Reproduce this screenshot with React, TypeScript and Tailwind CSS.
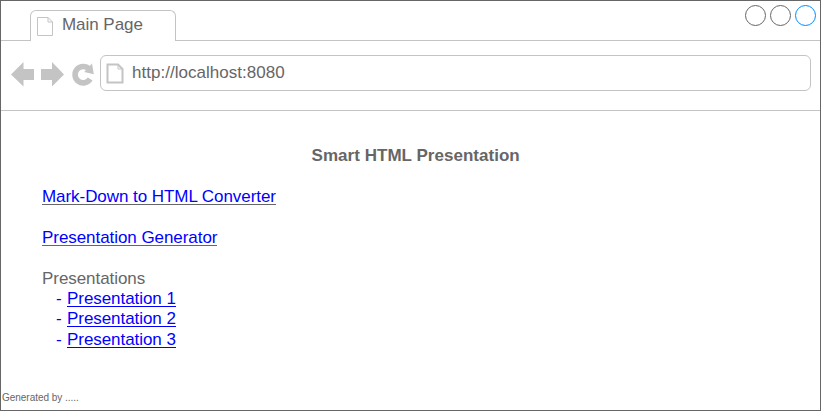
const presentations = ["Presentation 1", "Presentation 2", "Presentation 3"];

function PageIcon({ className, strokeWidth }: { className: string; strokeWidth: number }) {
  return (
    <svg className={className} viewBox="0 0 18 21" fill="none" stroke="#c4c4c4" strokeWidth={strokeWidth}>
      <path d="M1.5 1.5H12L16.5 6V19.5H1.5Z" />
      <path d="M12 1.5V6H16.5" strokeWidth="1" />
    </svg>
  );
}

function TabBar() {
  return (
    <header className="flex h-10 justify-between border-b border-[#c4c4c4]">
      <div className="ml-[29px] mt-[9px] flex h-[31px] w-[146px] rounded-t-[6px] border border-b-0 border-[#c4c4c4] bg-white pl-[5px]">
        <PageIcon className="mt-[5px] h-[21px] w-[18px] shrink-0" strokeWidth={1} />
        <span className="ml-[8px] mt-[4px] leading-5 tracking-[-0.04px]">Main Page</span>
      </div>
      <div className="mr-[4px] mt-[4px] flex gap-[4px]">
        <i className="size-[21px] rounded-full border border-[#666]" />
        <i className="size-[21px] rounded-full border border-[#666]" />
        <i className="size-[21px] rounded-full border border-[#008cff]" />
      </div>
    </header>
  );
}

function Toolbar() {
  return (
    <div className="flex h-[70px] border-b border-[#c4c4c4] pr-[9px]">
      <svg className="ml-[10px] mt-[21px] h-[26px] w-[84px] shrink-0" viewBox="0 0 84 26" fill="#c4c4c4">
        <path d="M0 12.5L12.5 0V7H23V18H12.5V24.5Z" />
        <path d="M53 12.5L41 0V7H30V18H41V24.5Z" />
        <path d="M79.2 17A8.2 8.2 0 1 1 78.2 7" fill="none" stroke="#c4c4c4" strokeWidth="5.6" />
        <path d="M81 1.6L82.8 12.2L73.2 9.9Z" />
      </svg>
      <div className="ml-[5px] mt-[14px] flex h-9 flex-1 rounded-[6px] border border-[#c4c4c4] pl-[5px]">
        <PageIcon className="mt-[7px] h-[21px] w-[18px] shrink-0" strokeWidth={2} />
        <span className="ml-[8px] mt-[7px] leading-5 tracking-[0.03px]">http://localhost:8080</span>
      </div>
    </div>
  );
}

export default function App() {
  return (
    <div className="flex h-[411px] w-[821px] flex-col border border-[#666] bg-white font-['Liberation_Sans',Arial,sans-serif] text-[17px] text-[#666]">
      <TabBar />
      <Toolbar />
      <main className="flex-1 pl-[41px] pt-[35px] leading-[20.4px] tracking-[-0.06px]">
        <h1 className="ml-[269.6px] font-bold tracking-[0.03px]">Smart HTML Presentation</h1>
        <p className="mt-[20.4px] flex">
          <a className="h-[18px] border-b border-[#666] text-[#0000ff]">Mark-Down to HTML Converter</a>
        </p>
        <p className="mt-[23px] flex">
          <a className="h-[18px] border-b border-[#666] text-[#0000ff]">Presentation Generator</a>
        </p>
        <p className="mt-[22.8px]">Presentations</p>
        <ul className="text-[#0000ff]">
          {presentations.map((name) => (
            <li key={name} className="flex h-[20.4px] pl-[14px]">
              <span className="w-[11px]">-</span>
              <a className="h-[18px] border-b border-[#0000ff]">{name}</a>
            </li>
          ))}
        </ul>
      </main>
      <footer className="pb-[6px] pl-px text-[10px] leading-3 tracking-[-0.03px]">Generated by .....</footer>
    </div>
  );
}
